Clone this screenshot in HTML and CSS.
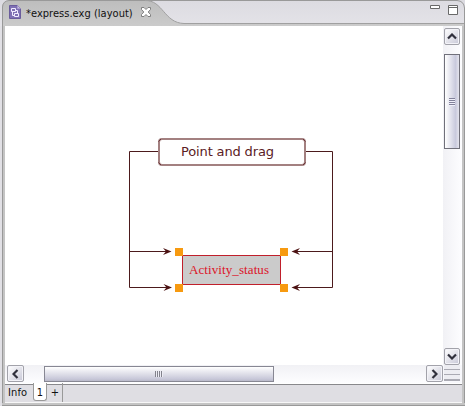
FILE: index.html
```html
<!DOCTYPE html>
<html lang="en">
<head>
<meta charset="utf-8">
<title>express.exg</title>
<link rel="stylesheet" href="styles.css">
</head>
<body>
<div class="window">
  <header class="titlebar">
    <svg class="tab-shape" width="465" height="26" viewBox="0 0 465 26">
      <defs><linearGradient id="tab" x1="0" y1="0" x2="0" y2="1"><stop offset="0" stop-color="#bdbdbd"/><stop offset="1" stop-color="#cbcbcb"/></linearGradient></defs>
      <path d="M2 26V6Q3 1 8 .5H145C163 0 164 23 184 23.500H464V26Z" fill="url(#tab)"/>
      <path d="M2.500 26V7Q3 1 9 .5H457Q464 1 464.500 8V26" fill="none" stroke="#999"/>
      <path d="M145 .5C163 0 164 23 184 23.500H464" fill="none" stroke="#a0a0a0"/>
    </svg>
    <div class="tab">
      <svg class="doc" width="12" height="15" viewBox="0 0 12 15">
        <path d="M.5.5H8.500L11.500 3.500V13.500H.5Z" fill="#7f70b4" stroke="#6a5c9c"/>
        <path d="M8.500.5V3.500H11.500" fill="#c8c0e4" stroke="#a99ccf"/>
        <path d="M2.500 3.500H6.500V6.500H2.500ZM5.500 8.500H9.500V11.500H5.500ZM3.500 7V10.500H5M7 5.500H8.500V8" fill="none" stroke="#f1edff"/>
      </svg>
      <span class="tab-label">*express.exg (layout)</span>
      <svg class="close" width="12" height="12" viewBox="0 0 12 12"><path d="M1.500 1.500H4L6 3.500 8 1.500H10.500V3.500L8.200 6 10.500 8.500V10.500H8L6 8.500 4 10.500H1.500V8.500L3.800 6 1.500 3.500Z" fill="#fff" stroke="#808080"/></svg>
    </div>
    <svg class="controls" width="30" height="12" viewBox="0 0 30 12"><path d="M1.500 1.500H10.500V4.500H1.500ZM19.500 1.500H28.500V10.500H19.500ZM19.500 3.500H28.500" fill="#fff" stroke="#696969"/></svg>
  </header>
  <main class="view">
    <svg class="canvas" width="438" height="339" viewBox="5 26 438 339">
      <g fill="none" stroke="#4c1a1c">
        <path d="M158 151.500H129.500V287.500H170M129.500 251.500H170M306 151.500H332.500V287.500H293M332.500 251.500H293"/>
      </g>
      <g fill="#4c1212">
        <path d="M171.500 251.500L163 248L166 251.500L163 255ZM172 287.500L163.500 284L166.500 287.500L163.500 291ZM291.500 251.500L300 248L297 251.500L300 255ZM291.500 287.500L300 284L297 287.500L300 291Z"/>
      </g>
      <rect x="159" y="139" width="146" height="26" rx="3" fill="#fff" stroke="#a38080" stroke-width="2"/>
      <path d="M158.500 141.500L161 139M303 139L305.500 141.500M158.500 162.500L161 165M303 165L305.500 162.500" stroke="#6b3438"/>
      <text class="source" x="181" y="156" textLength="93">Point and drag</text>
      <rect x="182.500" y="255.500" width="98" height="29" fill="#cbcbcb" stroke="#c01f2b"/>
      <text class="target" x="189" y="274" textLength="80">Activity_status</text>
      <path d="M175 248h8v8h-8zM280 248h8v8h-8zM175 284h8v8h-8zM280 284h8v8h-8z" fill="#f79a10"/>
    </svg>
    <div class="vscroll">
      <div class="button"><svg width="10" height="7" viewBox="0 0 10 7"><path d="M1 5.500L5 1.500 9 5.500"/></svg></div>
      <div class="vthumb"><i></i></div>
      <div class="button"><svg width="10" height="7" viewBox="0 0 10 7"><path d="M1 1.500L5 5.500 9 1.500"/></svg></div>
    </div>
    <div class="hscroll">
      <div class="button"><svg width="7" height="10" viewBox="0 0 7 10"><path d="M5.500 1L1.500 5 5.500 9"/></svg></div>
      <div class="hthumb"><i></i></div>
      <div class="button"><svg width="7" height="10" viewBox="0 0 7 10"><path d="M1.500 1L5.500 5 1.500 9"/></svg></div>
    </div>
    <div class="grip"></div>
  </main>
  <footer class="pages"><span class="info">Info</span><span class="page">1</span><span class="add">+</span></footer>
  <div class="base"></div>
</div>
</body>
</html>
```

FILE: styles.css
```css
* { box-sizing: border-box; }
body { margin: 0; background: #e4e3e8; font: 11px "DejaVu Sans Condensed", "DejaVu Sans", sans-serif; color: #111; overflow: hidden; }
svg { display: block; flex: none; }
.window { width: 465px; height: 406px; display: grid; grid-template-rows: 26px 357px 20px 3px; background: linear-gradient(90deg, #e1e0e5 0 2px, #999 2px 3px, #c4c4c4 3px 5px, #f8f8fc 5px 462px, #c4c4c4 462px 464px, #999 464px); }
.titlebar { position: relative; display: flex; justify-content: space-between; background: linear-gradient(#dcdbe1, #e4e3e8); }
.tab-shape { position: absolute; inset: 0; }
.tab, .controls { position: relative; }
.tab { display: flex; align-items: flex-start; padding: 5px 0 0 9px; }
.tab-label { width: 108px; margin: 2px 6px 0 5px; line-height: 13px; font-size: 11px; letter-spacing: .03px; white-space: nowrap; }
.close { margin-top: 1px; }
.controls { margin: 4px 6px 0 0; }
.view { display: grid; grid-template: 339px 18px / 438px 19px; margin: 0 3px 0 5px; background: #f8f8fc; }
.canvas { background: #fff; }
.source { font: 13px "DejaVu Sans", sans-serif; fill: #5a2024; }
.target { font: 13px "Liberation Serif", serif; fill: #dc1428; }
.vscroll { display: flex; flex-direction: column; background: linear-gradient(90deg, #f1f1f5, #fdfdff); padding: 2px 2px 0 1px; }
.hscroll { display: flex; background: linear-gradient(#f1f1f5, #fdfdff); padding: 0 0 1px 2px; }
.button { width: 17px; height: 17px; display: flex; align-items: center; justify-content: center; flex: none; border: 1px solid #a2a2aa; border-radius: 2px; background: linear-gradient(135deg, #fff, #c8c8d7); box-shadow: inset 0 0 0 1px #f3f3f8; }
.vscroll .button { width: 16px; }
.button path { fill: none; stroke: #30303c; stroke-width: 2.2; }
.vthumb { width: 16px; height: 95px; margin-top: 9px; margin-bottom: auto; border: 1px solid #70707a; background: linear-gradient(90deg, #fff, #c9cadd 75%, #e4e4ed); display: flex; align-items: center; justify-content: center; }
.vthumb i { width: 6px; height: 8px; background: repeating-linear-gradient(#82829a 0 1px, #f0f0fa 1px 2px); }
.hthumb { width: 230px; height: 16px; margin: 1px auto 0 20px; border: 1px solid #878793; background: linear-gradient(#fff, #c8c8d9 85%, #b9b9c9); display: flex; align-items: center; justify-content: center; }
.hthumb i { width: 8px; height: 6px; background: repeating-linear-gradient(90deg, #82828c 0 1px, #ececf4 1px 2px); }
.grip { height: 16px; margin: 0 2px 0 1px; border-bottom: 1px solid #aaaab3; background: repeating-linear-gradient(#ededf2 0 4px, #aaaab3 4px 5px); }
.pages { display: flex; margin: 0 3px 0 5px; background: linear-gradient(#fff 0 1px, #88888c 1px 2px, #dfdee3 2px 19px, #f7f7f7 19px); line-height: 18px; }
.info { width: 28px; padding: 1px 0 0 3px; letter-spacing: .1px; }
.page { width: 14px; height: 18px; background: #fff; border: solid #999; border-width: 0 1px 1px; border-radius: 0 0 3px 3px; text-align: center; line-height: 19px; }
.add { width: 16px; height: 19px; padding-left: 1px; border-right: 1px solid #999; text-align: center; line-height: 19px; }
.base { margin-left: 2px; background: linear-gradient(#c4c4c4 0 2px, #999 2px); }
```
